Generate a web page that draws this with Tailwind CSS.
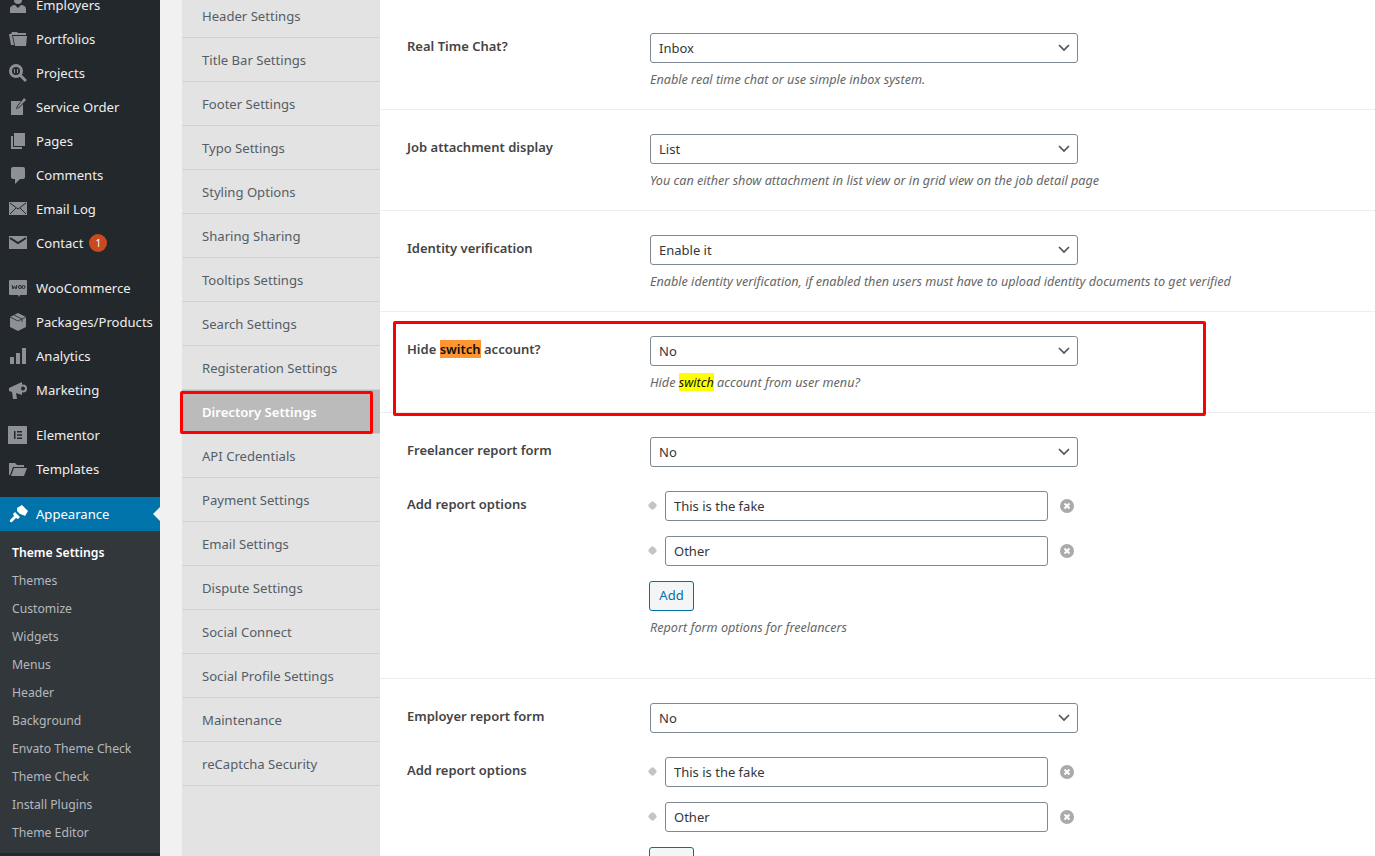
<!DOCTYPE html>
<html lang="en">

<head>
    <meta charset="UTF-8">
    <meta name="viewport" content="width=device-width, initial-scale=1.0">
    <title>Theme Settings</title>
    <script src="https://cdn.jsdelivr.net/npm/@tailwindcss/browser@4"></script>
</head>

<body class="font-['Noto_Sans','Open_Sans',sans-serif] text-[13px]">

    <div class="relative flex h-[856px] w-[1375px] overflow-hidden bg-[#f1f1f1]">

        <!-- wp admin menu -->
        <div class="w-[160px] shrink-0 bg-[#23282d] text-[#eeeeee] text-[13.100px] -mt-[12px]">
            <div class="flex h-[34px] items-center">
                <svg class="ml-[8px] mr-[8px] h-5 w-5 fill-[#8d9195]" viewBox="0 0 20 20"><circle cx="10" cy="5" r="4"/><path d="M2 18v-4c0-3 3-4 5-4l3 3 3-3c2 0 5 1 5 4v4z"/></svg>
                <span class="pt-[2px]">Employers</span>
            </div>
            <div class="flex h-[34px] items-center">
                <svg class="ml-[8px] mr-[8px] h-5 w-5 fill-[#8d9195]" viewBox="0 0 20 20"><path d="M1 5h2l1-2h5l1 1h8v2H4l2 10H3z"/><path d="M5 7h14l-1 10H7z"/></svg>
                <span class="pt-[2px]">Portfolios</span>
            </div>
            <div class="flex h-[34px] items-center">
                <svg class="ml-[8px] mr-[8px] h-5 w-5 fill-[#8d9195]" viewBox="0 0 20 20"><path fill-rule="evenodd" d="M8 1a7 7 0 1 1 0 14A7 7 0 0 1 8 1zm0 3a4 4 0 1 0 0 8 4 4 0 0 0 0-8z"/><path d="M13 11l6 6-2 2-6-6zM6 6h1v4H6zm3 0h1v4H9z"/></svg>
                <span class="pt-[2px]">Projects</span>
            </div>
            <div class="flex h-[34px] items-center">
                <svg class="ml-[8px] mr-[8px] h-5 w-5 fill-[#8d9195]" viewBox="0 0 20 20"><path d="M3 4h10l-4 5-1 3 3-1 4-4v11H3z"/><path d="M16 1l2 2-7 7-2 1 1-2z"/></svg>
                <span class="pt-[2px]">Service Order</span>
            </div>
            <div class="flex h-[34px] items-center">
                <svg class="ml-[8px] mr-[8px] h-5 w-5 fill-[#8d9195]" viewBox="0 0 20 20"><path d="M6 2h11v13H6z"/><path d="M3 5h2v11h9v2H3z"/></svg>
                <span class="pt-[2px]">Pages</span>
            </div>
            <div class="flex h-[34px] items-center">
                <svg class="ml-[8px] mr-[8px] h-5 w-5 fill-[#8d9195]" viewBox="0 0 20 20"><path d="M5 2h10a2 2 0 0 1 2 2v8a2 2 0 0 1-2 2h-3l-5 5v-5H5a2 2 0 0 1-2-2V4a2 2 0 0 1 2-2z"/></svg>
                <span class="pt-[2px]">Comments</span>
            </div>
            <div class="flex h-[34px] items-center">
                <svg class="ml-[8px] mr-[8px] h-5 w-5 fill-[#8d9195]" viewBox="0 0 20 20"><path d="M1 3h18v13H1z"/><path d="M2 4l8 6 8-6M2 15l6-6M18 15l-6-6" fill="none" stroke="#23282d"/></svg>
                <span class="pt-[2px]">Email Log</span>
            </div>
            <div class="flex h-[34px] items-center">
                <svg class="ml-[8px] mr-[8px] h-5 w-5 fill-[#8d9195]" viewBox="0 0 20 20"><path d="M1 3h18v13H1z"/><path d="M2 5l8 5 8-5" fill="none" stroke="#23282d" stroke-width="2"/></svg>
                <span class="pt-[2px]">Contact</span>
                <span class="ml-[6px] flex h-[18px] w-[18px] items-center justify-center rounded-full bg-[#ca4a1f] text-[10px] text-white">1</span>
            </div>

            <div class="mt-[11px] flex h-[34px] items-center">
                <svg class="ml-[8px] mr-[8px] h-5 w-5 fill-[#8d9195]" viewBox="0 0 20 20"><path d="M2 2h16a1 1 0 0 1 1 1v13a1 1 0 0 1-1 1h-6l-1 2-1-2H2a1 1 0 0 1-1-1V3a1 1 0 0 1 1-1z"/><path d="M4 7l1 4 1.500-3 1.500 3 1-4" fill="none" stroke="#23282d"/><circle cx="12" cy="9" r="1.500" fill="none" stroke="#23282d"/><circle cx="15.500" cy="9" r="1.500" fill="none" stroke="#23282d"/></svg>
                <span class="pt-[2px]">WooCommerce</span>
            </div>
            <div class="flex h-[34px] items-center">
                <svg class="ml-[8px] mr-[8px] h-5 w-5 fill-[#8d9195]" viewBox="0 0 20 20"><path d="M10 1l8 4v10l-8 4-8-4V5z"/><path d="M2 5l8 4 8-4M6 3l8 4v3" fill="none" stroke="#23282d" stroke-width="0.800"/></svg>
                <span class="whitespace-nowrap pt-[2px]">Packages/Products</span>
            </div>
            <div class="flex h-[34px] items-center">
                <svg class="ml-[8px] mr-[8px] h-5 w-5 fill-[#8d9195]" viewBox="0 0 20 20"><path d="M2 11h4v7H2zM8 7h4v11H8zM14 2h4v16h-4z"/></svg>
                <span class="pt-[2px]">Analytics</span>
            </div>
            <div class="flex h-[34px] items-center">
                <svg class="ml-[8px] mr-[8px] h-5 w-5 fill-[#8d9195]" viewBox="0 0 20 20"><path d="M1 8l13-6v13L8 13l1 6H5l-1-7-3-1z"/><circle cx="15" cy="8.500" r="4"/><circle cx="15" cy="8.500" r="2" fill="#23282d"/></svg>
                <span class="pt-[2px]">Marketing</span>
            </div>

            <div class="mt-[11px] flex h-[34px] items-center">
                <svg class="ml-[8px] mr-[8px] h-5 w-5 fill-[#8d9195]" viewBox="0 0 20 20"><path fill-rule="evenodd" d="M0 1h19v18H0zM6 6v8h1.500V6zm3 0v1.500h5V6zm0 3.200v1.500h5V9.200zm0 3.300V14h5v-1.500z"/></svg>
                <span class="pt-[2px]">Elementor</span>
            </div>
            <div class="flex h-[34px] items-center">
                <svg class="ml-[8px] mr-[8px] h-5 w-5 fill-[#8d9195]" viewBox="0 0 20 20"><path d="M1 4h6l2 2h7v2H5l-3 8H1z"/><path d="M6 9h13l-3 8H3z"/></svg>
                <span class="pt-[2px]">Templates</span>
            </div>

            <div class="relative mt-[11px] flex h-[34px] items-center bg-[#0073aa] text-white">
                <svg class="ml-[8px] mr-[8px] h-5 w-5 fill-white" viewBox="0 0 20 20"><path d="M9 4l5-3 6 6-3 5-2-1-3-1-3-3z"/><path d="M7 8l5 5-2 2-2-1-4 4c-1 1-3-1-2-2l4-4-1-2z"/></svg>
                <span class="pt-[2px]">Appearance</span>
                <span class="absolute right-0 top-[10px] h-0 w-0 border-y-[7px] border-r-[7px] border-y-transparent border-r-[#f1f1f1]"></span>
            </div>
            <div class="bg-[#32373c] py-[7px] pl-[12px] text-[12.200px] text-[#b4b9be]">
                <div class="flex h-[28px] items-center pt-[2px] font-semibold text-white">Theme Settings</div>
                <div class="flex h-[28px] items-center pt-[2px]">Themes</div>
                <div class="flex h-[28px] items-center pt-[2px]">Customize</div>
                <div class="flex h-[28px] items-center pt-[2px]">Widgets</div>
                <div class="flex h-[28px] items-center pt-[2px]">Menus</div>
                <div class="flex h-[28px] items-center pt-[2px]">Header</div>
                <div class="flex h-[28px] items-center pt-[2px]">Background</div>
                <div class="flex h-[28px] items-center pt-[2px] whitespace-nowrap">Envato Theme Check</div>
                <div class="flex h-[28px] items-center pt-[2px]">Theme Check</div>
                <div class="flex h-[28px] items-center pt-[2px]">Install Plugins</div>
                <div class="flex h-[28px] items-center pt-[2px]">Theme Editor</div>
            </div>
        </div>

        <!-- settings tabs -->
        <div class="ml-[22px] w-[198px] shrink-0 bg-[#e3e3e3] text-[13.100px] text-[#555d66] -mt-[6px]">
            <div class="flex h-[44px] items-center border-b border-[#d2d2d2] pl-[20px] pt-[2px]">Header Settings</div>
            <div class="flex h-[44px] items-center border-b border-[#d2d2d2] pl-[20px] pt-[2px]">Title Bar Settings</div>
            <div class="flex h-[44px] items-center border-b border-[#d2d2d2] pl-[20px] pt-[2px]">Footer Settings</div>
            <div class="flex h-[44px] items-center border-b border-[#d2d2d2] pl-[20px] pt-[2px]">Typo Settings</div>
            <div class="flex h-[44px] items-center border-b border-[#d2d2d2] pl-[20px] pt-[2px]">Styling Options</div>
            <div class="flex h-[44px] items-center border-b border-[#d2d2d2] pl-[20px] pt-[2px]">Sharing Sharing</div>
            <div class="flex h-[44px] items-center border-b border-[#d2d2d2] pl-[20px] pt-[2px]">Tooltips Settings</div>
            <div class="flex h-[44px] items-center border-b border-[#d2d2d2] pl-[20px] pt-[2px]">Search Settings</div>
            <div class="flex h-[44px] items-center border-b border-[#d2d2d2] pl-[20px] pt-[2px]">Registeration Settings</div>
            <div class="flex h-[44px] items-center border-b border-[#d2d2d2] bg-[#bbbbbb] pl-[20px] pt-[2px] font-semibold text-white">Directory Settings</div>
            <div class="flex h-[44px] items-center border-b border-[#d2d2d2] pl-[20px] pt-[2px]">API Credentials</div>
            <div class="flex h-[44px] items-center border-b border-[#d2d2d2] pl-[20px] pt-[2px]">Payment Settings</div>
            <div class="flex h-[44px] items-center border-b border-[#d2d2d2] pl-[20px] pt-[2px]">Email Settings</div>
            <div class="flex h-[44px] items-center border-b border-[#d2d2d2] pl-[20px] pt-[2px]">Dispute Settings</div>
            <div class="flex h-[44px] items-center border-b border-[#d2d2d2] pl-[20px] pt-[2px]">Social Connect</div>
            <div class="flex h-[44px] items-center border-b border-[#d2d2d2] pl-[20px] pt-[2px]">Social Profile Settings</div>
            <div class="flex h-[44px] items-center border-b border-[#d2d2d2] pl-[20px] pt-[2px]">Maintenance</div>
            <div class="flex h-[44px] items-center border-b border-[#d2d2d2] pl-[20px] pt-[2px]">reCaptcha Security</div>
        </div>

        <!-- settings panel -->
        <div class="min-w-0 flex-1 bg-white pt-[9px] text-[13px] text-[#32373c]">

            <div class="grid grid-cols-[243px_428px] border-b border-[#eeeeee] pb-[20px] pl-[27px] pt-[24px]">
                <div class="pt-[4px] font-semibold text-[#444444]">Real Time Chat?</div>
                <div>
                    <div class="relative">
                        <select class="block h-[30px] w-full appearance-none rounded-[3px] border border-[#7e8993] bg-white pl-[8px] pt-[2px]"><option>Inbox</option></select>
                        <svg class="pointer-events-none absolute right-[8px] top-[10px] h-[10px] w-[12px] fill-none stroke-[#555555] stroke-[1.700]" viewBox="0 0 12 10"><path d="M1 2l5 5 5-5"/></svg>
                    </div>
                    <p class="mt-[6px] h-[20px] whitespace-nowrap text-[12.630px] italic leading-[20px] text-[#666666]">Enable real time chat or use simple inbox system.</p>
                </div>
            </div>

            <div class="grid grid-cols-[243px_428px] border-b border-[#eeeeee] pb-[20px] pl-[27px] pt-[24px]">
                <div class="pt-[4px] font-semibold text-[#444444]">Job attachment display</div>
                <div>
                    <div class="relative">
                        <select class="block h-[30px] w-full appearance-none rounded-[3px] border border-[#7e8993] bg-white pl-[8px] pt-[2px]"><option>List</option></select>
                        <svg class="pointer-events-none absolute right-[8px] top-[10px] h-[10px] w-[12px] fill-none stroke-[#555555] stroke-[1.700]" viewBox="0 0 12 10"><path d="M1 2l5 5 5-5"/></svg>
                    </div>
                    <p class="mt-[6px] h-[20px] whitespace-nowrap text-[12.630px] italic leading-[20px] text-[#666666]">You can either show attachment in list view or in grid view on the job detail page</p>
                </div>
            </div>

            <div class="grid grid-cols-[243px_428px] border-b border-[#eeeeee] pb-[20px] pl-[27px] pt-[24px]">
                <div class="pt-[4px] font-semibold text-[#444444]">Identity verification</div>
                <div>
                    <div class="relative">
                        <select class="block h-[30px] w-full appearance-none rounded-[3px] border border-[#7e8993] bg-white pl-[8px] pt-[2px]"><option>Enable it</option></select>
                        <svg class="pointer-events-none absolute right-[8px] top-[10px] h-[10px] w-[12px] fill-none stroke-[#555555] stroke-[1.700]" viewBox="0 0 12 10"><path d="M1 2l5 5 5-5"/></svg>
                    </div>
                    <p class="mt-[6px] h-[20px] whitespace-nowrap text-[12.630px] italic leading-[20px] text-[#666666]">Enable identity verification, if enabled then users must have to upload identity documents to get verified</p>
                </div>
            </div>

            <div class="grid grid-cols-[243px_428px] border-b border-[#eeeeee] pb-[20px] pl-[27px] pt-[24px]">
                <div class="pt-[4px] font-semibold text-[#444444]">Hide <mark class="bg-[#ff9632] text-[#111111]">switch</mark> account?</div>
                <div>
                    <div class="relative">
                        <select class="block h-[30px] w-full appearance-none rounded-[3px] border border-[#7e8993] bg-white pl-[8px] pt-[2px]"><option>No</option></select>
                        <svg class="pointer-events-none absolute right-[8px] top-[10px] h-[10px] w-[12px] fill-none stroke-[#555555] stroke-[1.700]" viewBox="0 0 12 10"><path d="M1 2l5 5 5-5"/></svg>
                    </div>
                    <p class="mt-[6px] h-[20px] whitespace-nowrap text-[12.630px] italic leading-[20px] text-[#666666]">Hide <mark class="bg-[#ffff00] text-[#111111]">switch</mark> account from user menu?</p>
                </div>
            </div>

            <div class="grid grid-cols-[243px_428px] border-b border-[#eeeeee] pb-[41px] pl-[27px] pt-[24px]">
                <div class="pt-[4px] font-semibold text-[#444444]">Freelancer report form</div>
                <div>
                    <div class="relative">
                        <select class="block h-[30px] w-full appearance-none rounded-[3px] border border-[#7e8993] bg-white pl-[8px] pt-[2px]"><option>No</option></select>
                        <svg class="pointer-events-none absolute right-[8px] top-[10px] h-[10px] w-[12px] fill-none stroke-[#555555] stroke-[1.700]" viewBox="0 0 12 10"><path d="M1 2l5 5 5-5"/></svg>
                    </div>
                </div>
                <div class="mt-[24px] pt-[4px] font-semibold text-[#444444]">Add report options</div>
                <div class="mt-[24px]">
                    <div class="flex h-[30px] items-center">
                        <span class="mr-[9px] h-[7px] w-[7px] rotate-45 rounded-[2px] bg-[#c4c4c4] -ml-[1px] -mt-[1px]"></span>
                        <input class="h-[30px] w-[383px] rounded-[3px] border border-[#7e8993] px-[8px]" value="This is the fake">
                        <svg class="ml-[12px] -mt-[1px] h-[14px] w-[14px]" viewBox="0 0 14 14"><circle cx="7" cy="7" r="7" fill="#aaaaaa"/><path d="M4.500 4.500l5 5m0-5l-5 5" stroke="#fff" stroke-width="2"/></svg>
                    </div>
                    <div class="mt-[15px] flex h-[30px] items-center">
                        <span class="mr-[9px] h-[7px] w-[7px] rotate-45 rounded-[2px] bg-[#c4c4c4] -ml-[1px] -mt-[1px]"></span>
                        <input class="h-[30px] w-[383px] rounded-[3px] border border-[#7e8993] px-[8px]" value="Other">
                        <svg class="ml-[12px] -mt-[1px] h-[14px] w-[14px]" viewBox="0 0 14 14"><circle cx="7" cy="7" r="7" fill="#aaaaaa"/><path d="M4.500 4.500l5 5m0-5l-5 5" stroke="#fff" stroke-width="2"/></svg>
                    </div>
                    <button class="mt-[15px] -ml-[1px] block h-[30px] w-[45px] rounded-[3px] border border-[#0071a1] bg-[#f3f5f6] text-[#0071a1]">Add</button>
                    <p class="mt-[6px] h-[20px] whitespace-nowrap text-[12.630px] italic leading-[20px] text-[#666666]">Report form options for freelancers</p>
                </div>
            </div>

            <div class="grid grid-cols-[243px_428px] pl-[27px] pt-[24px]">
                <div class="pt-[4px] font-semibold text-[#444444]">Employer report form</div>
                <div>
                    <div class="relative">
                        <select class="block h-[30px] w-full appearance-none rounded-[3px] border border-[#7e8993] bg-white pl-[8px] pt-[2px]"><option>No</option></select>
                        <svg class="pointer-events-none absolute right-[8px] top-[10px] h-[10px] w-[12px] fill-none stroke-[#555555] stroke-[1.700]" viewBox="0 0 12 10"><path d="M1 2l5 5 5-5"/></svg>
                    </div>
                </div>
                <div class="mt-[24px] pt-[4px] font-semibold text-[#444444]">Add report options</div>
                <div class="mt-[24px]">
                    <div class="flex h-[30px] items-center">
                        <span class="mr-[9px] h-[7px] w-[7px] rotate-45 rounded-[2px] bg-[#c4c4c4] -ml-[1px] -mt-[1px]"></span>
                        <input class="h-[30px] w-[383px] rounded-[3px] border border-[#7e8993] px-[8px]" value="This is the fake">
                        <svg class="ml-[12px] -mt-[1px] h-[14px] w-[14px]" viewBox="0 0 14 14"><circle cx="7" cy="7" r="7" fill="#aaaaaa"/><path d="M4.500 4.500l5 5m0-5l-5 5" stroke="#fff" stroke-width="2"/></svg>
                    </div>
                    <div class="mt-[15px] flex h-[30px] items-center">
                        <span class="mr-[9px] h-[7px] w-[7px] rotate-45 rounded-[2px] bg-[#c4c4c4] -ml-[1px] -mt-[1px]"></span>
                        <input class="h-[30px] w-[383px] rounded-[3px] border border-[#7e8993] px-[8px]" value="Other">
                        <svg class="ml-[12px] -mt-[1px] h-[14px] w-[14px]" viewBox="0 0 14 14"><circle cx="7" cy="7" r="7" fill="#aaaaaa"/><path d="M4.500 4.500l5 5m0-5l-5 5" stroke="#fff" stroke-width="2"/></svg>
                    </div>
                    <button class="mt-[15px] -ml-[1px] block h-[30px] w-[45px] rounded-[3px] border border-[#0071a1] bg-[#f3f5f6] text-[#0071a1]"></button>
                </div>
            </div>
        </div>

        <!-- red annotation boxes drawn on top of the screenshot -->
        <div class="pointer-events-none absolute left-[180px] top-[391px] h-[43px] w-[193px] rounded-[2px] border-[3px] border-[#ff0000]"></div>
        <div class="pointer-events-none absolute left-[393px] top-[321px] h-[95px] w-[813px] rounded-[2px] border-[3px] border-[#ff0000]"></div>
    </div>

</body>

</html>
